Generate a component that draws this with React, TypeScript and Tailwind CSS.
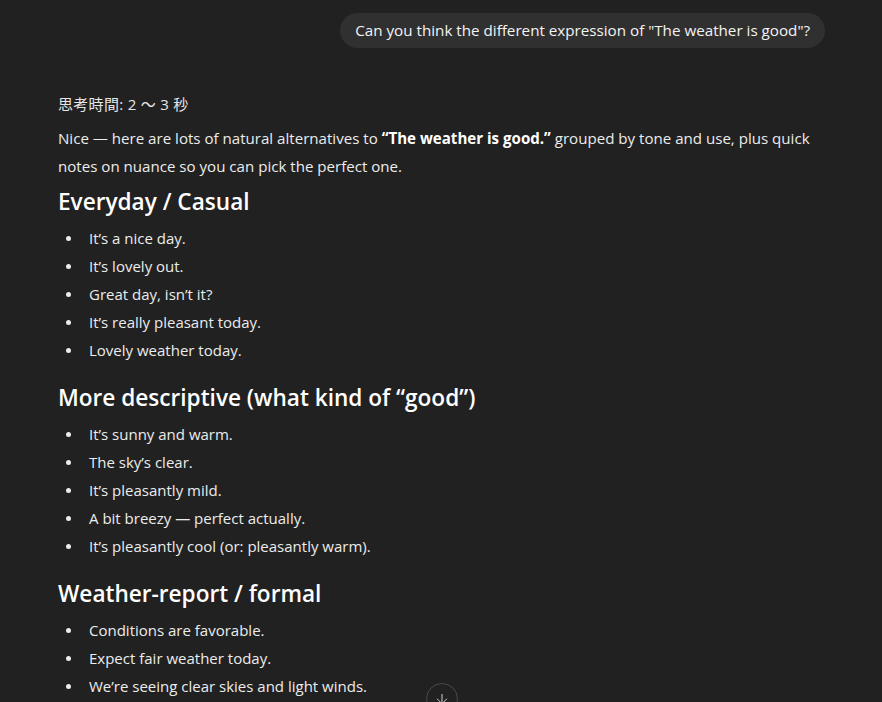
import React from 'react';
import { ArrowDown } from 'lucide-react';

const sections: { title: string; items: string[] }[] = [
  {
    title: 'Everyday / Casual',
    items: [
      'It’s a nice day.',
      'It’s lovely out.',
      'Great day, isn’t it?',
      'It’s really pleasant today.',
      'Lovely weather today.',
    ],
  },
  {
    title: 'More descriptive (what kind of “good”)',
    items: [
      'It’s sunny and warm.',
      'The sky’s clear.',
      'It’s pleasantly mild.',
      'A bit breezy — perfect actually.',
      'It’s pleasantly cool (or: pleasantly warm).',
    ],
  },
  {
    title: 'Weather-report / formal',
    items: [
      'Conditions are favorable.',
      'Expect fair weather today.',
      'We’re seeing clear skies and light winds.',
    ],
  },
];

const Section: React.FC<{ title: string; items: string[]; first?: boolean }> = ({ title, items, first }) => (
  <div className={first ? 'mt-[6px]' : 'mt-[18px]'}>
    <h3 className="text-[22.6px] leading-8 font-semibold text-white">{title}</h3>
    <ul className="mt-[6px]">
      {items.map((item) => (
        <li key={item} className="flex items-center leading-7 text-[15px] text-[#ececec]">
          <span className="ml-[8px] mr-[18px] w-[5px] h-[5px] rounded-full bg-[#ececec] shrink-0" />
          {item}
        </li>
      ))}
    </ul>
  </div>
);

export default function App() {
  return (
    <div
      className="relative w-[882px] h-[702px] overflow-hidden bg-[#212121] text-[#ececec]"
      style={{ fontFamily: '"Open Sans", "Noto Sans CJK JP", sans-serif' }}
    >
      <div className="px-[57px] pt-[13px]">
        <div className="flex justify-end">
          <div className="bg-[#303030] rounded-full px-[15px] h-[35px] flex items-center text-[15.2px] text-[#f3f3f3]">
            Can you think the different expression of "The weather is good"?
          </div>
        </div>

        <div className="mt-[46px] ml-[1px] text-[15px] leading-5 text-[#e6e6e6] tracking-[0.3px]">思考時間: 2 〜 3 秒</div>

        <p className="mt-[10px] ml-[1px] text-[15.1px] leading-7 text-[#ececec]">
          Nice — here are lots of natural alternatives to <strong className="font-bold text-white">“The weather is good.”</strong> grouped by tone and use, plus quick notes on nuance so you can pick the perfect one.
        </p>

        <div className="ml-[1px]">
          {sections.map((s, i) => (
            <Section key={s.title} title={s.title} items={s.items} first={i === 0} />
          ))}
        </div>
      </div>

      <button className="absolute left-[426px] top-[683px] w-[32px] h-[32px] rounded-full border border-[#4a4a4a] bg-[#212121] flex items-center justify-center text-[#d0d0d0]">
        <ArrowDown size={16} strokeWidth={1.5} />
      </button>
    </div>
  );
}
